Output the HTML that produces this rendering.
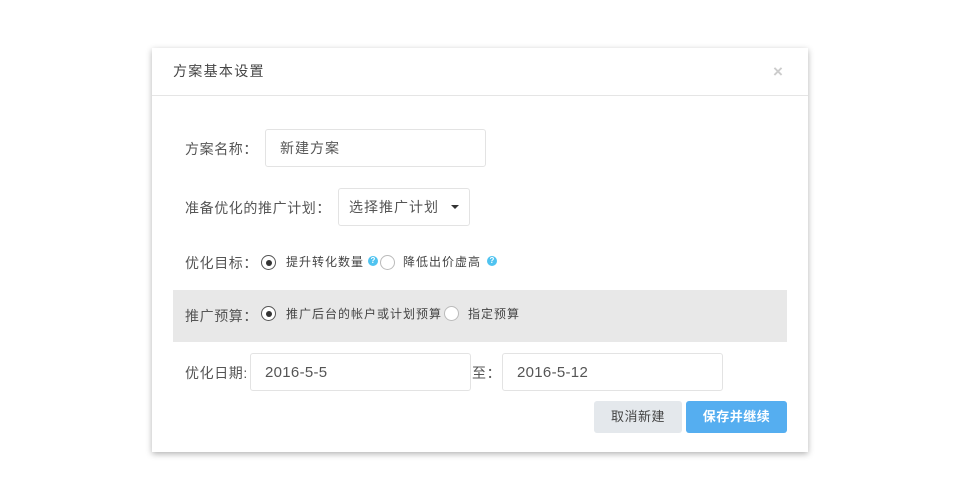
<!DOCTYPE html><html><head><meta charset="utf-8"><style>
body{margin:0;width:970px;height:498px;background:#fff;font-family:"Liberation Sans","Noto Sans CJK SC",sans-serif;color:#555;position:relative;overflow:hidden}
.a{position:absolute;white-space:nowrap}
.dlg{position:absolute;left:152px;top:48px;width:656px;height:404px;background:#fff;box-shadow:0 2px 6px rgba(0,0,0,.3)}
.inp{position:absolute;border:1px solid #e3e3e3;border-radius:3px;background:#fff;box-sizing:border-box;font-size:14px;color:#555;padding-left:14px;display:flex;align-items:center;letter-spacing:1px}
.lab{font-size:14px;color:#555;letter-spacing:0.6px}
.rad{position:absolute;width:15px;height:15px;border:1px solid #555;border-radius:50%;box-sizing:border-box;background:#fff}
.rad.on::after{content:"";position:absolute;left:3.5px;top:3.5px;width:6px;height:6px;border-radius:50%;background:#333}
.rad.off{border-color:#bbb}
.q{position:absolute;width:10px;height:10px;border-radius:50%;background:#4fc3f0;color:#fff;font-size:8px;font-weight:bold;text-align:center;line-height:10px}
.sm{font-size:12px;color:#444;letter-spacing:1px}
.dt{font-size:15px;letter-spacing:0.3px}
</style></head><body>
<div class="dlg"></div>
<div class="a" style="left:173px;top:61px;font-size:14px;color:#444;letter-spacing:1.3px">方案基本设置</div>
<div class="a" style="left:773px;top:62px;font-size:17px;color:#ccc;font-weight:bold">×</div>
<div class="a" style="left:152px;top:95px;width:656px;height:1px;background:#e5e5e5"></div>

<div class="a lab" style="left:185px;top:139px">方案名称：</div>
<div class="inp" style="left:265px;top:129px;width:221px;height:38px">新建方案</div>

<div class="a lab" style="left:185px;top:198px">准备优化的推广计划：</div>
<div class="inp" style="left:338px;top:188px;width:132px;height:38px;padding-left:10px">选择推广计划<span style="position:absolute;right:10px;top:16px;border:4px solid transparent;border-top:4px solid #333;border-bottom:0"></span></div>

<div class="a lab" style="left:185px;top:253px">优化目标：</div>
<div class="rad on" style="left:261px;top:255px"></div>
<div class="a sm" style="left:286px;top:253px">提升转化数量</div>
<div class="q" style="left:368px;top:256px">?</div>
<div class="rad off" style="left:380px;top:255px"></div>
<div class="a sm" style="left:403px;top:253px">降低出价虚高</div>
<div class="q" style="left:487px;top:256px">?</div>

<div class="a" style="left:173px;top:290px;width:614px;height:52px;background:#e8e8e8"></div>
<div class="a lab" style="left:185px;top:306px">推广预算：</div>
<div class="rad on" style="left:261px;top:306px"></div>
<div class="a sm" style="left:286px;top:305px">推广后台的帐户或计划预算</div>
<div class="rad off" style="left:444px;top:306px"></div>
<div class="a sm" style="left:468px;top:305px">指定预算</div>

<div class="a lab" style="left:185px;top:363px">优化日期:</div>
<div class="inp dt" style="left:250px;top:353px;width:221px;height:38px">2016-5-5</div>
<div class="a lab" style="left:472px;top:363px">至：</div>
<div class="inp dt" style="left:502px;top:353px;width:221px;height:38px">2016-5-12</div>

<div class="a" style="left:594px;top:401px;width:88px;height:32px;background:#e4e8ec;border-radius:3px;font-size:13px;color:#444;text-align:center;line-height:32px;letter-spacing:0.5px">取消新建</div>
<div class="a" style="left:686px;top:401px;width:101px;height:32px;background:#55aef0;border-radius:3px;font-size:13px;color:#fff;font-weight:bold;text-align:center;line-height:32px;letter-spacing:0.5px">保存并继续</div>
</body></html>
